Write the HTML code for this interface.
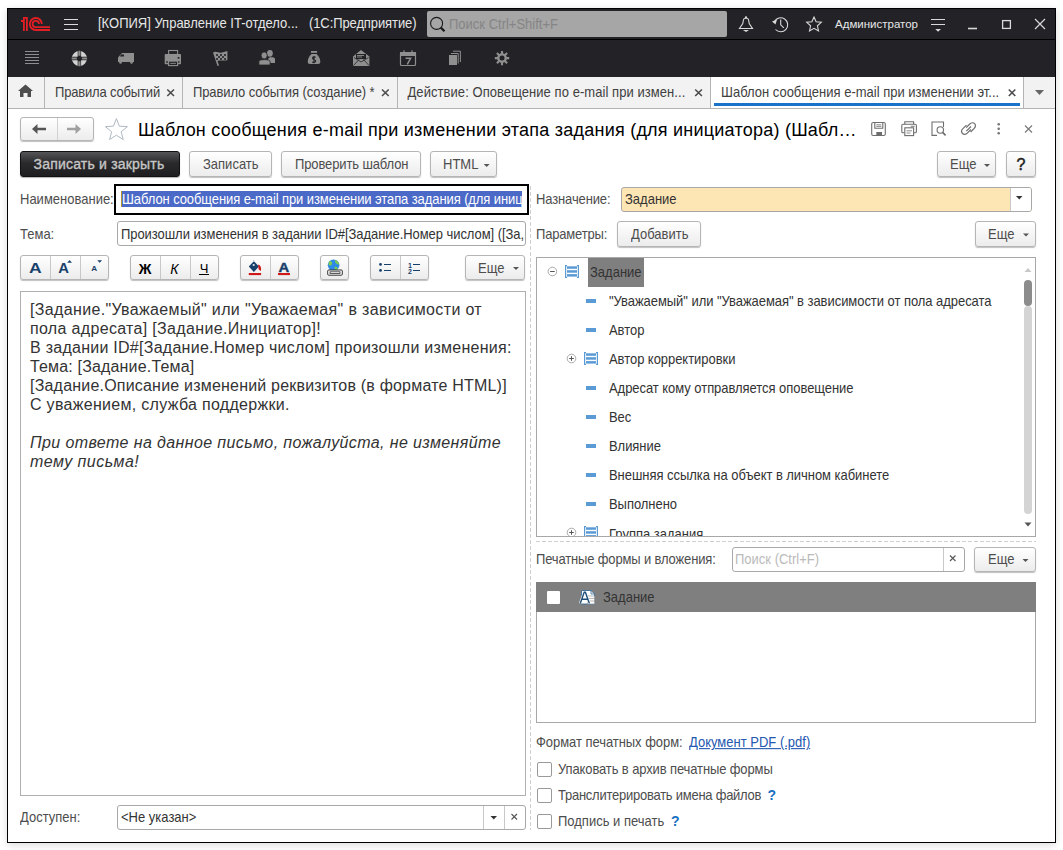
<!DOCTYPE html>
<html><head><meta charset="utf-8">
<style>
*{box-sizing:border-box;margin:0;padding:0}
html,body{width:1063px;height:850px;overflow:hidden;background:#fff;font-family:"Liberation Sans",sans-serif;color:#4d4d4d}
.a{position:absolute}
.t{position:absolute;white-space:nowrap;line-height:1}
#win{position:absolute;left:7px;top:8px;width:1049px;height:835px;border:1px solid #000;background:#fff;box-shadow:0 2px 8px rgba(0,0,0,.14)}
.btn{position:absolute;border:1px solid #b5b5b5;border-radius:3px;background:linear-gradient(#fff,#ececec);box-shadow:0 1px 1px rgba(0,0,0,.25)}
.fld{position:absolute;border:1px solid #a8a8a8;border-radius:3px;background:#fff}
.ti{position:absolute;fill:none}
.t[style*="font-size:13px"]{transform:scaleY(1.09);transform-origin:0 11px}
</style></head>
<body>
<div id="win"></div>
<!-- title bar -->
<div class="a" style="left:8px;top:9px;width:1047px;height:30px;background:#232327"></div>
<div class="a" style="left:8px;top:39px;width:1047px;height:1px;background:#000"></div>
<div class="a" style="left:8px;top:40px;width:1047px;height:37px;background:#232327"></div>
<svg class="a" style="left:0;top:0" width="1063" height="80" viewBox="0 0 1063 80">
 <g fill="none" stroke="#e31e24" stroke-width="1.8">
  <path d="M21 21H24M23.9 31V17.9H26.9M26.9 17V31"/>
  <path d="M41.8 24A6 6 0 1 0 35.8 30H50"/>
  <path d="M39 24A3.2 3.2 0 1 0 35.8 27.2H50"/>
 </g>
 <g stroke="#dcdcdc" stroke-width="1.2">
  <path d="M64 19.5H78M64 24.5H78M64 29.5H78"/>
 </g>
 <!-- search -->
 <rect x="427" y="11" width="300" height="26" rx="2" fill="#a6a6a6"/>
 <circle cx="436.6" cy="23.4" r="6" fill="none" stroke="#1a1a1a" stroke-width="1.1"/>
 <path d="M440.8 27.6L444.5 31.3" stroke="#1a1a1a" stroke-width="2.2"/>
 <!-- bell -->
 <g fill="none" stroke="#d9d9d9" stroke-width="1.1">
  <path d="M739.5 28.5H752.5L749.2 23.5C748.5 19 748.5 18.2 746 18 743.5 18.2 743.5 19 742.8 23.5Z"/>
  <circle cx="746" cy="17.5" r="0.6"/>
 </g>
 <path d="M743 30H749L746 32Z" fill="#d9d9d9"/>
 <!-- history -->
 <g fill="none" stroke="#d9d9d9" stroke-width="1.1">
  <path d="M774.5 21.5A7 7 0 1 1 775.5 29.5"/>
  <path d="M780.7 19.5V24.8L783.8 27.8"/>
 </g>
 <path d="M772 21.5L777 19.5L775.5 24.5Z" fill="#d9d9d9"/>
 <!-- star -->
 <path d="M814 17L816.1 21.8L821.3 22.3L817.4 25.8L818.5 30.9L814 28.3L809.5 30.9L810.6 25.8L806.7 22.3L811.9 21.8Z" fill="none" stroke="#d9d9d9" stroke-width="1.1"/>
 <!-- filter -->
 <g stroke="#d9d9d9" stroke-width="1.2"><path d="M931 19.5H945M931 24.5H945"/></g>
 <path d="M935.3 29H941L938.1 31.7Z" fill="#d9d9d9"/>
 <!-- window buttons -->
 <path d="M968 28.5H977" stroke="#d9d9d9" stroke-width="1.6"/>
 <rect x="1002.6" y="20.6" width="7.8" height="7.8" fill="none" stroke="#d9d9d9" stroke-width="1.3"/>
 <path d="M1035 19L1045 29M1045 19L1035 29" stroke="#d9d9d9" stroke-width="1.2"/>
 <!-- toolbar icons -->
 <g stroke="#8f8f8f" stroke-width="1"><path d="M25 51.5H39M25 54.5H39M25 57.5H39M25 60.5H39M25 63.5H39"/></g>
 <!-- lifebuoy -->
 <circle cx="79.4" cy="58.5" r="5.15" fill="none" stroke="#d2d2d2" stroke-width="4.9"/>
 <path d="M79.4 50.5V56M79.4 61V66.5M71.4 58.5H76.9M81.9 58.5H87.4" stroke="#232327" stroke-width="3.4"/>
 <path d="M79.4 50.8V55.8M79.4 61.2V66.2M71.7 58.5H76.7M82.1 58.5H87.1" stroke="#8e8e8e" stroke-width="2.2"/>
 <!-- truck -->
 <path d="M118 62V57.5L122 53H134V62Z" fill="#8f8f8f"/>
 <path d="M121 54.5H124V56.5H120Z" fill="#232327"/>
 <circle cx="120.5" cy="62.5" r="1.3" fill="#8f8f8f"/><circle cx="131.5" cy="62.5" r="1.3" fill="#8f8f8f"/>
 <!-- printer -->
 <rect x="168.6" y="50.5" width="9" height="4" fill="none" stroke="#8f8f8f" stroke-width="1.1"/>
 <rect x="164.7" y="54.1" width="16.3" height="10.2" rx="0.8" fill="#8f8f8f"/>
 <rect x="166.2" y="61.2" width="1.6" height="1.6" fill="#232327"/><rect x="177.9" y="61.2" width="1.6" height="1.6" fill="#232327"/><rect x="177.7" y="57" width="1.7" height="1.7" fill="#232327"/>
 <rect x="168.6" y="61.1" width="9" height="4.5" fill="#232327" stroke="#8f8f8f" stroke-width="1.1"/>
 <path d="M170.3 63.4H175.9" stroke="#8f8f8f" stroke-width="0.9"/>
 <!-- flag -->
 <path d="M213 52.5C216 50.5 219 53.5 222 52.5L227.4 51V60C224 61.5 221 59.5 217.5 61L219 65.5L217.5 66L213 52.5Z" fill="#8f8f8f"/>
 <path d="M216 54h2v2h-2zM220 54h2v2h-2zM224 54h2v2h-2zM218 56h2v2h-2zM222 56h2v2h-2zM216 58h2v2h-2zM220 58h2v2h-2zM224 58h2v2h-2z" fill="#3a3a3e"/>
 <!-- people -->
 <ellipse cx="269.9" cy="53.3" rx="2.9" ry="3.4" fill="#8f8f8f"/>
 <path d="M268.2 63V59C268.2 57.8 269.5 57.2 271.6 57.2 273.7 57.2 275 57.8 275 59V63Z" fill="#8f8f8f"/>
 <ellipse cx="264.2" cy="55.4" rx="3.1" ry="3.5" fill="#8f8f8f" stroke="#232327" stroke-width="0.8"/>
 <path d="M258.9 65V61.6C258.9 60.3 260.8 59.6 264.5 59.6 268.2 59.6 270.1 60.3 270.1 61.6V65Z" fill="#8f8f8f" stroke="#232327" stroke-width="0.8"/>
 <!-- money bag -->
 <rect x="310.9" y="51" width="6.2" height="1.8" fill="#8f8f8f"/>
 <path d="M311.5 54H316.5C318.5 55.5 320.3 58.5 320.3 61.5 320.3 63.3 319.5 64 318 64H310C308.5 64 307.8 63.3 307.8 61.5 307.8 58.5 309.5 55.5 311.5 54Z" fill="#8f8f8f"/>
 <path d="M315.6 57.3C315 56.7 312.5 56.5 312.5 58.2 312.5 59.7 315.7 59.3 315.7 61.1 315.7 62.8 313.1 62.7 312.3 62M314 55.9V63.3" fill="none" stroke="#232327" stroke-width="1.1"/>
 <!-- envelope -->
 <path d="M353 56.5L361 50L369.4 56.5V66H353Z" fill="#8f8f8f"/>
 <rect x="356" y="54" width="10" height="5" fill="#232327"/>
 <path d="M357 55.5H364M357 57H362" stroke="#8f8f8f" stroke-width="0.9"/>
 <path d="M353.5 65.5L359 59.5M369 65.5L363.5 59.5M354 57.5L361 62L368.5 57.5" fill="none" stroke="#232327" stroke-width="0.8"/>
 <!-- calendar -->
 <rect x="400.5" y="52.5" width="15" height="13" rx="1" fill="none" stroke="#8f8f8f" stroke-width="1.2"/>
 <rect x="400" y="52" width="16" height="4" fill="#8f8f8f"/>
 <path d="M404 50.3V53M412 50.3V53" stroke="#8f8f8f" stroke-width="1.2"/>
 <path d="M405.6 58.3H410.6L407.3 64.3" fill="none" stroke="#8f8f8f" stroke-width="1.5"/>
 <!-- copy -->
 <rect x="449" y="55" width="8" height="10" fill="#8f8f8f"/>
 <path d="M458.2 63.5V53.5H451M460.4 62V51.2H453" fill="none" stroke="#8f8f8f" stroke-width="1"/>
 <!-- gear -->
 <circle cx="502" cy="58.1" r="4.9" fill="#8f8f8f"/>
 <path d="M502 50.9V65.3M494.8 58.1H509.2M496.9 53L507.1 63.2M507.1 53L496.9 63.2" stroke="#8f8f8f" stroke-width="2.1"/>
 <circle cx="502" cy="58.1" r="2.5" fill="#232327"/>
</svg>
<div class="t" style="left:98px;top:17px;font-size:13px;color:#e6e6e6">[КОПИЯ] Управление IT-отдело...</div>
<div class="t" style="left:309px;top:17px;font-size:13px;color:#e6e6e6;letter-spacing:-0.1px">(1С:Предприятие)</div>
<div class="t" style="left:449px;top:18px;font-size:13px;color:#858585">Поиск Ctrl+Shift+F</div>
<div class="t" style="left:835px;top:19px;font-size:11.5px;color:#e6e6e6">Администратор</div>
<!-- tabs -->
<div class="a" style="left:8px;top:77px;width:1047px;height:31px;background:#f2f2f2"></div>
<div class="a" style="left:8px;top:108px;width:1047px;height:1px;background:#b4b4b4"></div>
<div class="a" style="left:44px;top:77px;width:1px;height:31px;background:#b4b4b4"></div>
<div class="a" style="left:182px;top:77px;width:1px;height:31px;background:#b4b4b4"></div>
<div class="a" style="left:397px;top:77px;width:1px;height:31px;background:#b4b4b4"></div>
<div class="a" style="left:710px;top:77px;width:1px;height:31px;background:#b4b4b4"></div>
<div class="a" style="left:711px;top:77px;width:312px;height:31px;background:#fff"></div>
<div class="a" style="left:1023px;top:77px;width:1px;height:31px;background:#b4b4b4"></div>
<div class="a" style="left:714px;top:103px;width:306px;height:3px;background:#1a73c9"></div>
<div class="t" style="left:55px;top:86px;font-size:13px;color:#404040;letter-spacing:-0.17px">Правила событий</div>
<div class="t" style="left:193px;top:86px;font-size:13px;color:#404040;letter-spacing:-0.1px">Правило события (создание) *</div>
<div class="t" style="left:407.5px;top:86px;font-size:13px;color:#404040;letter-spacing:0.06px">Действие: Оповещение по e-mail при измен...</div>
<div class="t" style="left:721px;top:86px;font-size:13px;color:#404040">Шаблон сообщения e-mail при изменении эт...</div>
<svg class="a" style="left:0;top:77px" width="1063" height="32" viewBox="0 77 1063 32">
 <path d="M18 91L25.5 84.5L33 91H31V97H27.5V93H23.5V97H20V91Z" fill="#4d4d4d"/>
 <g stroke="#4d4d4d" stroke-width="1.6"><path d="M167.3 89.5L174 96M174 89.5L167.3 96M382 89.5L388.7 96M388.7 89.5L382 96M695.2 89.5L701.9 96M701.9 89.5L695.2 96M1008.8 89.5L1015.3 96M1015.3 89.5L1008.8 96"/></g>
 <path d="M1035 90H1044L1039.5 95Z" fill="#666"/>
</svg>
<!-- form header -->
<div class="btn" style="left:20px;top:117px;width:74px;height:24px"></div>
<div class="a" style="left:57px;top:118px;width:1px;height:22px;background:#d2d2d2"></div>
<svg class="a" style="left:0;top:110px" width="1063" height="40" viewBox="0 110 1063 40">
 <path d="M32 129L37.5 124V127.8H46V130.2H37.5V134Z" fill="#555"/>
 <path d="M81 129L75.5 124V127.8H67V130.2H75.5V134Z" fill="#a0a0a0"/>
 <path d="M116.40 118.60L119.34 126.15L127.43 126.62L121.16 131.75L123.22 139.58L116.40 135.20L109.58 139.58L111.64 131.75L105.37 126.62L113.46 126.15Z" fill="none" stroke="#b0b9c2" stroke-width="1" stroke-linejoin="miter"/>
 <!-- save -->
 <g fill="none" stroke="#6e6e6e" stroke-width="1.1">
  <rect x="871.7" y="122.5" width="13.6" height="13" rx="1.5"/>
  <path d="M874.8 122.5V128.2H882.8V122.5"/>
  <path d="M876.3 124.8H881.3M876.3 126.4H881.3" stroke-width="0.8"/>
 </g>
 <rect x="876.3" y="132" width="5.7" height="3.8" fill="#6e6e6e"/>
 <!-- print -->
 <g fill="none" stroke="#6e6e6e" stroke-width="1.1">
  <path d="M904.8 124.2V121.7H913.6V124.2"/>
  <path d="M904.3 132.8H903C902 132.8 901.8 132.3 901.8 131.5V125.6C901.8 124.7 902.2 124.2 903 124.2H915.2C916 124.2 916.4 124.7 916.4 125.6V131.5C916.4 132.3 916 132.8 915.2 132.8H914"/>
  <rect x="904.8" y="127.8" width="8.8" height="7.8" fill="#fff"/>
  <path d="M906.5 130.8H912M906.5 133H910.5" stroke-width="0.8"/>
  <path d="M910.7 126.3H914.7" stroke-width="0.9"/>
 </g>
 <!-- preview -->
 <g fill="none" stroke="#6e6e6e" stroke-width="1.1">
  <path d="M937 135.4H932V122H943.5V127"/>
  <circle cx="940.3" cy="130" r="3.2"/>
  <path d="M942.6 132.4L945.6 135.4" stroke-width="1.7"/>
 </g>
 <!-- link -->
 <g fill="none" stroke="#6e6e6e" stroke-width="1.2">
  <path d="M966.2 127.6L969.8 124C971.3 122.5 973.3 122.3 974.6 123.6 975.9 124.9 975.7 126.9 974.2 128.4L970.6 132"/>
  <path d="M970.9 129.5L967.3 133.1C965.8 134.6 963.8 134.8 962.5 133.5 961.2 132.2 961.4 130.2 962.9 128.7L966.5 125.1"/>
  <path d="M966.3 131.2L971 126.5"/>
 </g>
 <g fill="#777"><circle cx="998.7" cy="124.3" r="1.3"/><circle cx="998.7" cy="128.8" r="1.3"/><circle cx="998.7" cy="133.3" r="1.3"/></g>
 <path d="M1025 125.5L1032 132.5M1032 125.5L1025 132.5" stroke="#777" stroke-width="1.1"/>
</svg>
<div class="t" style="left:138px;top:120.6px;font-size:18px;color:#000;letter-spacing:0.23px">Шаблон сообщения e-mail при изменении этапа задания (для инициатора) (Шабл…</div>
<!-- command bar -->
<div class="a" style="left:20px;top:151px;width:160px;height:26px;border-radius:3px;background:linear-gradient(#555558,#2a2a2d 45%,#1e1e21);border:1px solid #111;box-shadow:0 1px 1px rgba(0,0,0,.3)"></div>
<div class="t" style="left:33.5px;top:157px;font-size:14px;color:#c6c6c6;letter-spacing:0.2px;-webkit-text-stroke:0.35px #c6c6c6">Записать и закрыть</div>
<div class="btn" style="left:189px;top:151px;width:83px;height:26px"></div>
<div class="t" style="left:203px;top:158px;font-size:13px;color:#4d4d4d">Записать</div>
<div class="btn" style="left:281px;top:151px;width:140px;height:26px"></div>
<div class="t" style="left:295px;top:158px;font-size:13px;color:#4d4d4d;letter-spacing:-0.12px">Проверить шаблон</div>
<div class="btn" style="left:430px;top:151px;width:67px;height:26px"></div>
<div class="t" style="left:443px;top:158px;font-size:13px;color:#4d4d4d">HTML</div>
<div class="btn" style="left:937px;top:151px;width:59px;height:26px"></div>
<div class="t" style="left:950px;top:158px;font-size:13px;color:#4d4d4d">Еще</div>
<div class="btn" style="left:1006px;top:151px;width:30px;height:26px"></div>
<div class="t" style="left:1016.5px;top:156.5px;font-size:16px;color:#222;-webkit-text-stroke:0.5px #222">?</div>
<svg class="a" style="left:0;top:150px" width="1063" height="30" viewBox="0 150 1063 30">
 <path d="M483.7 164H489.7L486.7 167Z" fill="#555"/>
 <path d="M984 164H990L987 167Z" fill="#555"/>
</svg>
<!-- naimenovanie -->
<div class="t" style="left:20px;top:193px;font-size:13px;color:#4d4d4d">Наименование:</div>
<div class="a" style="left:114px;top:184px;width:415px;height:31px;border:2px solid #000;background:#fff;overflow:hidden">
 <div class="a" style="left:5px;top:5px;width:401px;height:16px;background:#4b69c6"></div>
 <div class="a" style="left:5px;top:5px;width:1px;height:16px;background:#b8922f"></div>
 <div class="t" style="left:6px;top:7px;font-size:13px;color:#fff;letter-spacing:-0.09px">Шаблон сообщения e-mail при изменении этапа задания (для иниц</div>
</div>
<div class="t" style="left:20px;top:228px;font-size:13px;color:#4d4d4d">Тема:</div>
<div class="fld" style="left:117px;top:221px;width:409px;height:25px;overflow:hidden">
 <div class="t" style="left:3px;top:6px;font-size:13px;color:#333;letter-spacing:-0.06px">Произошли изменения в задании ID#[Задание.Номер числом] ([За,</div>
</div>
<!-- format toolbar -->
<div class="btn" style="left:20px;top:255px;width:89px;height:25px"></div>
<div class="btn" style="left:130px;top:255px;width:89px;height:25px"></div>
<div class="btn" style="left:240px;top:255px;width:59px;height:25px"></div>
<div class="btn" style="left:320px;top:255px;width:29px;height:25px"></div>
<div class="btn" style="left:370px;top:255px;width:59px;height:25px"></div>
<div class="btn" style="left:465px;top:255px;width:60px;height:25px"></div>
<div class="t" style="left:478px;top:262px;font-size:13px;color:#4d4d4d">Еще</div>
<svg class="a" style="left:0;top:250px" width="540" height="35" viewBox="0 250 540 35">
 <g fill="#c8c8c8"><rect x="50" y="256" width="1" height="23"/><rect x="80" y="256" width="1" height="23"/><rect x="160" y="256" width="1" height="23"/><rect x="190" y="256" width="1" height="23"/><rect x="270" y="256" width="1" height="23"/><rect x="400" y="256" width="1" height="23"/></g>
 <text transform="translate(35.45 273) scale(1.14 1)" font-family="Liberation Sans" font-size="15.4" font-weight="bold" fill="#17406b" text-anchor="middle">A</text>
 <text transform="translate(63.65 273) scale(1.06 1)" font-family="Liberation Sans" font-size="14" font-weight="bold" fill="#17406b" text-anchor="middle">A</text>
 <path d="M67.2 262.7H72L69.6 260Z" fill="#17406b"/>
 <text transform="translate(94.1 271) scale(1.07 1)" font-family="Liberation Sans" font-size="7.6" font-weight="bold" fill="#17406b" text-anchor="middle">A</text>
 <path d="M97.3 260.2H102L99.65 262.8Z" fill="#17406b"/>
 <text x="145" y="273.5" font-family="Liberation Sans" font-size="14" font-weight="bold" fill="#000" text-anchor="middle">Ж</text>
 <text x="174.5" y="273.5" font-family="Liberation Sans" font-size="14" font-style="italic" fill="#000" text-anchor="middle">К</text>
 <text x="204" y="272.5" font-family="Liberation Sans" font-size="13" fill="#000" text-anchor="middle">Ч</text>
 <rect x="199" y="274" width="10" height="1" fill="#000"/>
 <path d="M248.8 266.6L253.85 261.2L258.9 266.6L253.85 272.1Z" fill="#17406b"/>
 <circle cx="253.7" cy="265" r="1.1" fill="#dfe8f0"/>
 <path d="M253.7 259.8V261.6" stroke="#b8c8d8" stroke-width="1"/>
 <path d="M258.1 264.6C260.6 265.3 261.6 267.6 260.9 271.1L258.6 269.6Z" fill="#d01818"/>
 <rect x="248.8" y="273" width="12.3" height="2.1" fill="#d01818"/>
 <text transform="translate(283.9 271.8) scale(1.1 1)" font-family="Liberation Sans" font-size="13.5" font-weight="bold" fill="#17406b" stroke="#17406b" stroke-width="0.4" text-anchor="middle">A</text>
 <rect x="278" y="273" width="12" height="2.1" fill="#d01818"/>
 <circle cx="333.6" cy="265.2" r="5.8" fill="#2e8ae6"/>
 <path d="M329 261.5C331 260.5 332.5 262 332 264 331 266 329 266 328.5 264.5Z M335 260C337 260.5 339 262 339 264.5 337.5 265 336 263.5 335 262Z M334.5 267C336 266.5 338 267 337.5 269.5 336 270.5 334.5 269.5 334.5 267Z" fill="#7ccd4e"/>
 <rect x="327.7" y="270" width="14.6" height="5.2" rx="1" fill="#fff" stroke="#333" stroke-width="1"/>
 <rect x="330" y="271.8" width="10" height="1.8" fill="#fff" stroke="#333" stroke-width="0.8"/>
 <g fill="#17406b"><circle cx="380.5" cy="264.4" r="1.4"/><circle cx="380.5" cy="270.4" r="1.4"/></g>
 <path d="M384 264.5H391M384 270.5H391M413 264.5H420M413 270.5H420" stroke="#17406b" stroke-width="1"/>
 <text x="410" y="267.8" font-family="Liberation Sans" font-size="7" font-weight="bold" fill="#17406b" text-anchor="middle">1</text>
 <text x="410" y="274" font-family="Liberation Sans" font-size="7" font-weight="bold" fill="#17406b" text-anchor="middle">2</text>
 <path d="M513 267H519L516 270Z" fill="#555"/>
</svg>
<!-- editor -->
<div class="a" style="left:20px;top:291px;width:506px;height:505px;border:1px solid #b0b0b0;background:#fff"></div>
<div class="t" style="left:30px;top:300px;font-size:16px;line-height:19px;color:#333;letter-spacing:0.347px">[Задание."Уважаемый" или "Уважаемая" в зависимости от</div>
<div class="t" style="left:30px;top:319px;font-size:16px;line-height:19px;color:#333;letter-spacing:0.329px">пола адресата] [Задание.Инициатор]!</div>
<div class="t" style="left:30px;top:338px;font-size:16px;line-height:19px;color:#333;letter-spacing:0.261px">В задании ID#[Задание.Номер числом] произошли изменения:</div>
<div class="t" style="left:30px;top:357px;font-size:16px;line-height:19px;color:#333;letter-spacing:0.165px">Тема: [Задание.Тема]</div>
<div class="t" style="left:30px;top:376px;font-size:16px;line-height:19px;color:#333;letter-spacing:0.200px">[Задание.Описание изменений реквизитов (в формате HTML)]</div>
<div class="t" style="left:30px;top:395px;font-size:16px;line-height:19px;color:#333;letter-spacing:0.303px">С уважением, служба поддержки.</div>
<div class="t" style="left:30px;top:433px;font-size:16px;line-height:19px;color:#333;letter-spacing:0.387px;font-style:italic">При ответе на данное письмо, пожалуйста, не изменяйте</div>
<div class="t" style="left:30px;top:452px;font-size:16px;line-height:19px;color:#333;letter-spacing:0.458px;font-style:italic">тему письма!</div>

<!-- dostupen -->
<div class="t" style="left:20px;top:811px;font-size:13px;color:#4d4d4d">Доступен:</div>
<div class="fld" style="left:117px;top:805px;width:409px;height:25px"></div>
<div class="a" style="left:483px;top:806px;width:1px;height:23px;background:#c8c8c8"></div>
<div class="a" style="left:504px;top:806px;width:1px;height:23px;background:#c8c8c8"></div>
<div class="t" style="left:121px;top:811px;font-size:13px;color:#333">&lt;Не указан&gt;</div>
<svg class="a" style="left:470px;top:800px" width="60" height="35" viewBox="470 800 60 35">
 <path d="M490.5 816H497L493.75 819.5Z" fill="#333"/>
 <path d="M511.5 814L517 819.5M517 814L511.5 819.5" stroke="#555" stroke-width="1.1"/>
</svg>
<!-- separators -->
<div class="a" style="left:530px;top:186px;width:1px;height:644px;background:repeating-linear-gradient(#d0d0d0 0 4px,transparent 4px 6px)"></div>
<div class="a" style="left:536px;top:541px;width:500px;height:1px;background:repeating-linear-gradient(90deg,#d0d0d0 0 4px,transparent 4px 6px)"></div>
<!-- right panel -->
<div class="t" style="left:536px;top:193px;font-size:13px;color:#4d4d4d;letter-spacing:-0.13px">Назначение:</div>
<div class="a" style="left:621px;top:187px;width:411px;height:25px;border:1px solid #a8a8a8;border-radius:3px;background:#fde6b4;overflow:hidden">
 <div class="a" style="left:388px;top:0;width:21px;height:23px;background:#fff;border-left:1px solid #c8c8c8"></div>
</div>
<div class="t" style="left:625px;top:193px;font-size:13px;color:#333">Задание</div>
<div class="t" style="left:536px;top:228px;font-size:13px;color:#4d4d4d;letter-spacing:-0.18px">Параметры:</div>
<div class="btn" style="left:617px;top:221px;width:84px;height:26px"></div>
<div class="t" style="left:631px;top:228px;font-size:13px;color:#4d4d4d">Добавить</div>
<div class="btn" style="left:975px;top:221px;width:61px;height:26px"></div>
<div class="t" style="left:988px;top:228px;font-size:13px;color:#4d4d4d">Еще</div>
<!-- tree -->
<div class="a" style="left:536px;top:257px;width:500px;height:280px;border:1px solid #a8a8a8;background:#fff"></div>
<div class="a" style="left:588px;top:258px;width:56px;height:29px;background:#7f7f7f"></div>
<div class="t" style="left:590px;top:266px;font-size:13px;color:#333">Задание</div>
<div class="t" style="left:609px;top:295.0px;font-size:13px;color:#333;letter-spacing:-0.05px">"Уважаемый" или "Уважаемая" в зависимости от пола адресата</div>
<div class="t" style="left:609px;top:324.0px;font-size:13px;color:#333;letter-spacing:-0.05px">Автор</div>
<div class="t" style="left:609px;top:353.0px;font-size:13px;color:#333;letter-spacing:-0.05px">Автор корректировки</div>
<div class="t" style="left:609px;top:382.0px;font-size:13px;color:#333;letter-spacing:-0.05px">Адресат кому отправляется оповещение</div>
<div class="t" style="left:609px;top:411.0px;font-size:13px;color:#333;letter-spacing:-0.05px">Вес</div>
<div class="t" style="left:609px;top:440.0px;font-size:13px;color:#333;letter-spacing:-0.05px">Влияние</div>
<div class="t" style="left:609px;top:469.0px;font-size:13px;color:#333;letter-spacing:-0.05px">Внешняя ссылка на объект в личном кабинете</div>
<div class="t" style="left:609px;top:498.0px;font-size:13px;color:#333;letter-spacing:-0.05px">Выполнено</div>
<div class="a" style="left:537px;top:520px;width:486px;height:16px;overflow:hidden">
 <div class="t" style="left:72px;top:7.7px;font-size:13px;color:#333">Группа задания</div>
</div>
<svg class="a" style="left:530px;top:180px" width="530" height="370" viewBox="530 180 530 370">
 <path d="M1016 196H1022.5L1019.25 199.5Z" fill="#333"/>
 <path d="M1023 233.5H1029L1026 236.5Z" fill="#555"/>
 <!-- tree icons -->
 <circle cx="552.4" cy="271.5" r="4.3" fill="none" stroke="#a0a0a0" stroke-width="0.9"/>
 <path d="M550.1 271.5H554.6999999999999" stroke="#555" stroke-width="1"/>
 <path d="M567 265.6H565.6V277.4H567M577 265.6H578.4V277.4H577" fill="none" stroke="#5b9bd5" stroke-width="1.2"/>
 <g fill="#5b9bd5"><rect x="567" y="266.3" width="10" height="2.5"/><rect x="567" y="270.2" width="10" height="2.5"/><rect x="567" y="274.1" width="10" height="2.5"/></g>
 <circle cx="571.5" cy="358.5" r="4.3" fill="none" stroke="#a0a0a0" stroke-width="0.9"/>
 <path d="M569.2 358.5H573.8M571.5 356.2V360.8" stroke="#555" stroke-width="1"/>
 <path d="M586 352.6H584.6V364.4H586M596 352.6H597.4V364.4H596" fill="none" stroke="#5b9bd5" stroke-width="1.2"/>
 <g fill="#5b9bd5"><rect x="586" y="353.3" width="10" height="2.5"/><rect x="586" y="357.2" width="10" height="2.5"/><rect x="586" y="361.1" width="10" height="2.5"/></g>
 <g fill="#5b9bd5"><rect x="586" y="299" width="10" height="4"/><rect x="586" y="328" width="10" height="4"/><rect x="586" y="386" width="10" height="4"/><rect x="586" y="415" width="10" height="4"/><rect x="586" y="444" width="10" height="4"/><rect x="586" y="473" width="10" height="4"/><rect x="586" y="502" width="10" height="4"/></g>
 <svg x="537" y="258" width="486" height="278" viewBox="537 258 486 278" overflow="hidden">
 <circle cx="571.5" cy="532.5" r="4.3" fill="none" stroke="#a0a0a0" stroke-width="0.9"/>
 <path d="M569.2 532.5H573.8M571.5 530.2V534.8" stroke="#555" stroke-width="1"/>
 <path d="M586 526.6H584.6V538.4H586M596 526.6H597.4V538.4H596" fill="none" stroke="#5b9bd5" stroke-width="1.2"/>
 <g fill="#5b9bd5"><rect x="586" y="527.3" width="10" height="2.5"/><rect x="586" y="531.2" width="10" height="2.5"/><rect x="586" y="535.1" width="10" height="2.5"/></g>
 </svg>
 <!-- scrollbar -->
 <path d="M1024.5 272H1031.5L1028 268Z" fill="#c8c8c8"/>
 <rect x="1024" y="306" width="8" height="208" rx="4" fill="#d4d4d4"/>
 <rect x="1024" y="280" width="8" height="26" rx="4" fill="#8c8c8c"/>
 <path d="M1024.5 522.5H1031.5L1028 526.5Z" fill="#555"/>
</svg>
<!-- print forms -->
<div class="t" style="left:536px;top:553px;font-size:13px;color:#4d4d4d;letter-spacing:-0.15px">Печатные формы и вложения:</div>
<div class="fld" style="left:732px;top:547px;width:233px;height:25px"></div>
<div class="a" style="left:943px;top:548px;width:1px;height:23px;background:#c8c8c8"></div>
<div class="t" style="left:735px;top:553px;font-size:13px;color:#bababa">Поиск (Ctrl+F)</div>
<div class="btn" style="left:974px;top:547px;width:62px;height:25px"></div>
<div class="t" style="left:988px;top:553px;font-size:13px;color:#4d4d4d">Еще</div>
<div class="a" style="left:536px;top:582px;width:500px;height:141px;border:1px solid #a8a8a8;background:#fff"></div>
<div class="a" style="left:536px;top:582px;width:500px;height:30px;background:#7f7f7f"></div>
<div class="a" style="left:547px;top:590.5px;width:13px;height:13.5px;background:#fff;border-radius:1px"></div>
<div class="t" style="left:603px;top:591px;font-size:13px;color:#333">Задание</div>
<svg class="a" style="left:530px;top:540px" width="530" height="300" viewBox="530 540 530 300">
 <path d="M950 555.5L955.5 561M955.5 555.5L950 561" stroke="#555" stroke-width="1.1"/>
 <path d="M1022.5 559H1028.5L1025.5 562Z" fill="#555"/>
 <path d="M581.5 590.5H591L594.5 594V604H581.5Z" fill="#fff" stroke="#3b6e98" stroke-width="0.9"/>
 <path d="M591 590.5V594H594.5" fill="none" stroke="#3b6e98" stroke-width="0.8"/>
 <rect x="587.5" y="596" width="7" height="8" fill="#fff" stroke="#999" stroke-width="0.7"/>
 <path d="M587.5 598.5H594.5M587.5 601H594.5" stroke="#999" stroke-width="0.7"/>
 <path d="M580.2 603.5L584.2 592.2H585.4L589.4 603.5M581.8 599.3H587.8" fill="none" stroke="#fff" stroke-width="2.6"/><path d="M580.2 603.5L584.2 592.2H585.4L589.4 603.5M581.8 599.3H587.8" fill="none" stroke="#1f4e79" stroke-width="1.4"/>
</svg>
<div class="t" style="left:536px;top:736px;font-size:13px;color:#4d4d4d;letter-spacing:-0.05px">Формат печатных форм:</div>
<div class="t" style="left:689px;top:736px;font-size:13px;color:#2458b0;text-decoration:underline">Документ PDF (.pdf)</div>
<div class="a" style="left:537px;top:762px;width:14.5px;height:14.5px;border:1px solid #999;border-radius:2px;background:#fff"></div>
<div class="a" style="left:537px;top:788px;width:14.5px;height:14.5px;border:1px solid #999;border-radius:2px;background:#fff"></div>
<div class="a" style="left:537px;top:814px;width:14.5px;height:14.5px;border:1px solid #999;border-radius:2px;background:#fff"></div>
<div class="t" style="left:558px;top:763px;font-size:13px;color:#4d4d4d;letter-spacing:-0.12px">Упаковать в архив печатные формы</div>
<div class="t" style="left:558px;top:789px;font-size:13px;color:#4d4d4d;letter-spacing:-0.25px">Транслитерировать имена файлов</div>
<div class="t" style="left:767.5px;top:788px;font-size:14px;font-weight:bold;color:#1a70c0">?</div>
<div class="t" style="left:558px;top:815px;font-size:13px;color:#4d4d4d">Подпись и печать</div>
<div class="t" style="left:671px;top:814px;font-size:14px;font-weight:bold;color:#1a70c0">?</div>
</body></html>
